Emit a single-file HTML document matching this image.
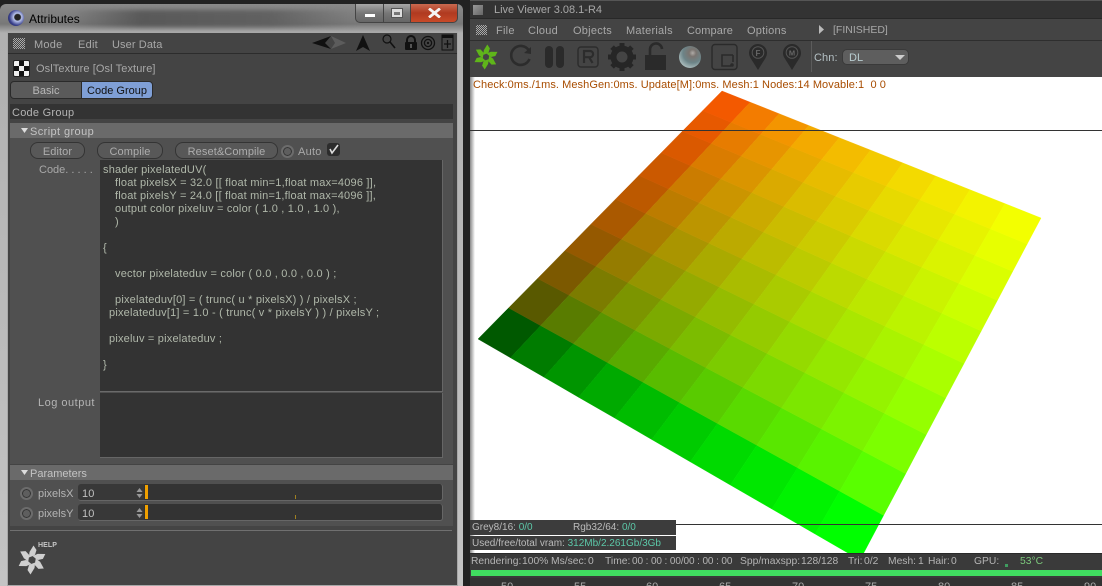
<!DOCTYPE html>
<html>
<head>
<meta charset="utf-8">
<style>
html,body{margin:0;padding:0;width:1102px;height:586px;overflow:hidden;background:#222;font-family:"Liberation Sans",sans-serif;font-size:11px}
#w{position:relative;width:1102px;height:586px;overflow:hidden;background:#222}
.a{position:absolute}
.t{position:absolute;white-space:nowrap;line-height:14px;color:#a8a8a8;margin-top:1px;letter-spacing:.1px}
.b{position:absolute;box-sizing:border-box;height:17px;top:142px;border-radius:8px;background:#585858;border:1px solid #343434;color:#adadad;text-align:center;line-height:18px;font-size:11px;letter-spacing:.1px}
.c{color:#b0b8aa;left:103px;letter-spacing:.2px}
.v{color:#5cc8a8}
.s{color:#b4b4b4;top:554px;font-size:10.3px;letter-spacing:0}
.i{font-size:10px;letter-spacing:0;color:#bbb}
.m{letter-spacing:.25px}
.rad{position:absolute;box-sizing:border-box;width:13px;height:13px;border-radius:50%;background:#5e5e5e;border:2px solid #6c6c6c;box-shadow:inset 0 0 0 1px #333}
.n{position:absolute;top:581px;color:#aaa;font-size:11px;line-height:12px}
</style>
</head>
<body>
<div id="w">
<!-- LEFT WINDOW -->
<div class="a" style="left:0;top:0;width:470px;height:586px;background:#222"></div>
<div class="a" style="left:0;top:4px;width:463px;height:582px;border-radius:6px 6px 0 0;background:linear-gradient(#8a8a8a,#787878 20px,#b0b0b0 29px,#c4c4c4)"></div>
<div class="a" style="left:70px;top:10px;width:285px;height:17px;background:linear-gradient(90deg,#55555500,#505050cc 25%,#5a5a5acc 70%,#8a8a8a00);filter:blur(2px)"></div>
<div class="a" style="left:7px;top:32px;width:451px;height:554px;background:#444;border:1px solid #a8a8a8;box-sizing:border-box"></div>
<!-- sys buttons -->
<div class="a" style="left:355px;top:4px;width:29px;height:19px;box-sizing:border-box;border:1px solid #444;border-top:none;border-radius:0 0 0 5px;background:linear-gradient(#a8a8a8,#777 50%,#666)"></div>
<div class="a" style="left:384px;top:4px;width:27px;height:19px;box-sizing:border-box;border:1px solid #444;border-top:none;border-left:none;background:linear-gradient(#a8a8a8,#777 50%,#666)"></div>
<div class="a" style="left:411px;top:4px;width:47px;height:19px;box-sizing:border-box;border:1px solid #444;border-top:none;border-left:none;border-radius:0 0 5px 0;background:linear-gradient(#c86a50,#b03a20 50%,#c84a28)"></div>
<div class="a" style="left:365px;top:14px;width:10px;height:3px;background:#fff"></div>
<div class="a" style="left:392px;top:9px;width:10px;height:8px;box-sizing:border-box;border:2px solid #ddd;border-top-width:3px;outline:1px solid #555"></div>
<svg class="a" style="left:428px;top:8px" width="13" height="10" viewBox="0 0 13 10"><path d="M1 .5 L12 9.500 M12 .5 L1 9.500" stroke="#f4f4f4" stroke-width="2.8"/></svg>
<!-- C4D logo + title -->
<div class="a" style="left:8px;top:10px;width:16px;height:16px;border-radius:50%;background:radial-gradient(circle at 60% 45%,#222 0,#222 22%,#b9c4ec 30%,#39408c 62%,#15183c 100%)"></div>
<div class="t" style="left:29px;top:11px;color:#000;font-size:12px;letter-spacing:0">Attributes</div>
<!-- attr menu -->
<div class="a" style="left:8px;top:53px;width:449px;height:1px;background:#2c2c2c"></div>
<div class="a" style="left:13px;top:38px;width:12px;height:11px;background:repeating-conic-gradient(#aaa 0 25%,#444 0 50%) 0 0/2px 2px"></div>
<div class="t m" style="left:34px;top:37px">Mode</div>
<div class="t m" style="left:78px;top:37px">Edit</div>
<div class="t" style="left:112px;top:37px">User Data</div>
<svg class="a" style="left:305px;top:32px" width="152" height="22" viewBox="305 32 152 22">
<path d="M312 43 L331 36 L325 43 L331 49 Z" fill="#111"/>
<path d="M346 43 L331 36 L335 43 L331 49 Z" fill="#5c5c5c"/>
<path d="M363 35 L370 51 L363 47 L356 51 Z" fill="#111"/>
<circle cx="387" cy="39" r="4" fill="none" stroke="#111" stroke-width="1.2"/><path d="M390 42 L395 48" stroke="#111" stroke-width="1.6"/>
<path d="M407 43 V40 a4 4 0 0 1 8 0 V43" fill="none" stroke="#111" stroke-width="2"/><rect x="405" y="42" width="12" height="8" rx="1" fill="#111"/><rect x="410" y="44" width="2" height="4" fill="#555"/>
<circle cx="428" cy="43" r="6.5" fill="none" stroke="#111" stroke-width="1.3"/><circle cx="428" cy="43" r="3.6" fill="none" stroke="#111" stroke-width="1.3"/><circle cx="428" cy="43" r="1.2" fill="#111"/>
<rect x="442" y="35" width="11" height="15" fill="none" stroke="#111"/><rect x="442" y="35" width="11" height="3" fill="#111"/><path d="M447.5 40 V48 M444 44 H451" stroke="#111" stroke-width="1.3"/>
</svg>
<!-- object -->
<div class="a" style="left:13px;top:60px;width:17px;height:17px;box-sizing:border-box;border:1px solid #222;border-radius:2px;background:repeating-conic-gradient(#111 0 25%,#eee 0 50%) 0 0/10px 10px"></div>
<div class="t" style="left:36px;top:61px">OslTexture [Osl Texture]</div>
<!-- tabs -->
<div class="a" style="left:10px;top:81px;width:72px;height:18px;box-sizing:border-box;border:1px solid #2a2a2a;border-radius:4px 0 0 4px;background:#5a5a5a;color:#b8b8b8;text-align:center;line-height:18px">Basic</div>
<div class="a" style="left:81px;top:81px;width:72px;height:18px;box-sizing:border-box;border:1px solid #2a2a2a;border-radius:0 4px 4px 0;background:#7f9fd6;color:#111;text-align:center;line-height:18px">Code Group</div>
<!-- section -->
<div class="a" style="left:10px;top:104px;width:443px;height:15px;background:#333"></div>
<div class="t m" style="left:12px;top:105px;color:#b4b4b4">Code Group</div>
<div class="a" style="left:10px;top:123px;width:443px;height:15px;background:#6a6a6a"></div>
<svg class="a" style="left:20px;top:128px" width="9" height="6"><path d="M1 0H8L4.5 5Z" fill="#ddd"/></svg>
<div class="t" style="left:30px;top:124px;color:#c4c4c4;letter-spacing:.4px">Script group</div>
<div class="a" style="left:10px;top:138px;width:443px;height:326px;background:#505050"></div>
<div class="b" style="left:30px;width:55px">Editor</div>
<div class="b" style="left:97px;width:66px">Compile</div>
<div class="b" style="left:175px;width:103px">Reset&amp;Compile</div>
<div class="rad" style="left:281px;top:145px"></div>
<div class="t m" style="left:298px;top:144px">Auto</div>
<div class="a" style="left:327px;top:143px;width:13px;height:13px;background:#2c2c2c;border-radius:3px"></div>
<svg class="a" style="left:327px;top:143px" width="13" height="13"><path d="M3 6 L5 10 L11 2" fill="none" stroke="#ddd" stroke-width="1.6"/></svg>
<!-- code -->
<div class="a" style="left:100px;top:160px;width:343px;height:232px;box-sizing:border-box;background:#333;border-right:1px solid #666;border-bottom:1px solid #6a6a6a"></div>
<div class="a" style="left:100px;top:393px;width:343px;height:65px;box-sizing:border-box;background:#333;border-right:1px solid #666;border-bottom:1px solid #666"></div>
<div class="t" style="left:39px;top:162px;letter-spacing:0">Code. . . . .</div>
<div class="t" style="left:38px;top:395px;color:#b4b4b4;letter-spacing:.5px">Log output</div>
<div class="t c" style="top:162px">shader pixelatedUV(</div>
<div class="t c" style="left:115px;top:175px">float pixelsX = 32.0 [[ float min=1,float max=4096 ]],</div>
<div class="t c" style="left:115px;top:188px">float pixelsY = 24.0 [[ float min=1,float max=4096 ]],</div>
<div class="t c" style="left:115px;top:201px">output color pixeluv = color ( 1.0 , 1.0 , 1.0 ),</div>
<div class="t c" style="left:115px;top:214px">)</div>
<div class="t c" style="top:240px">{</div>
<div class="t c" style="left:115px;top:266px">vector pixelateduv = color ( 0.0 , 0.0 , 0.0 ) ;</div>
<div class="t c" style="left:115px;top:292px">pixelateduv[0] = ( trunc( u * pixelsX) ) / pixelsX ;</div>
<div class="t c" style="left:109px;top:305px">pixelateduv[1] = 1.0 - ( trunc( v * pixelsY ) ) / pixelsY ;</div>
<div class="t c" style="left:109px;top:331px">pixeluv = pixelateduv ;</div>
<div class="t c" style="top:357px">}</div>
<!-- parameters -->
<div class="a" style="left:10px;top:465px;width:443px;height:15px;background:#6a6a6a"></div>
<svg class="a" style="left:20px;top:470px" width="9" height="6"><path d="M1 0H8L4.5 5Z" fill="#ddd"/></svg>
<div class="t" style="left:30px;top:466px;color:#c4c4c4;letter-spacing:0">Parameters</div>
<div class="a" style="left:10px;top:480px;width:443px;height:46px;background:#505050"></div>
<div class="rad" style="left:20px;top:487px"></div>
<div class="rad" style="left:20px;top:507px"></div>
<div class="t" style="left:38px;top:486px;color:#b4b4b4;letter-spacing:0">pixelsX</div>
<div class="t" style="left:38px;top:506px;color:#b4b4b4;letter-spacing:0">pixelsY</div>
<div class="a" style="left:78px;top:484px;width:66px;height:17px;box-sizing:border-box;background:#383838;border-bottom:1px solid #666;border-radius:3px 0 0 3px"></div>
<div class="a" style="left:78px;top:504px;width:66px;height:17px;box-sizing:border-box;background:#383838;border-bottom:1px solid #666;border-radius:3px 0 0 3px"></div>
<div class="t" style="left:82px;top:486px;color:#c0c0c0">10</div>
<div class="t" style="left:82px;top:506px;color:#c0c0c0">10</div>
<svg class="a" style="left:136px;top:488px" width="7" height="10"><path d="M3.5 0L6.5 4H.5ZM3.5 10L.5 6H6.5Z" fill="#999"/></svg>
<svg class="a" style="left:136px;top:508px" width="7" height="10"><path d="M3.5 0L6.5 4H.5ZM3.5 10L.5 6H6.5Z" fill="#999"/></svg>
<div class="a" style="left:144px;top:484px;width:299px;height:17px;box-sizing:border-box;background:#333;border-right:1px solid #666;border-bottom:1px solid #666;border-radius:0 3px 3px 0"></div>
<div class="a" style="left:144px;top:504px;width:299px;height:17px;box-sizing:border-box;background:#333;border-right:1px solid #666;border-bottom:1px solid #666;border-radius:0 3px 3px 0"></div>
<div class="a" style="left:145px;top:485px;width:3px;height:14px;background:#f0a000"></div>
<div class="a" style="left:145px;top:505px;width:3px;height:14px;background:#f0a000"></div>
<div class="a" style="left:295px;top:495px;width:1px;height:4px;background:#a08020"></div>
<div class="a" style="left:295px;top:515px;width:1px;height:4px;background:#a08020"></div>
<div class="a" style="left:10px;top:530px;width:442px;height:1px;background:#707070"></div>
<svg class="a" style="left:16px;top:543px" width="32" height="34" viewBox="-16 -17 32 34"><g fill="#cfcfcf">
<path d="M-3.2 -2.5 L-2.5 -8 L1.500 -14.500 L4.500 -10 L3 -5.200 L1.200 -4.100 Z"/>
<path d="M-3.2 -2.5 L-2.5 -8 L1.500 -14.500 L4.500 -10 L3 -5.200 L1.200 -4.100 Z" transform="rotate(60)"/>
<path d="M-3.2 -2.5 L-2.5 -8 L1.500 -14.500 L4.500 -10 L3 -5.200 L1.200 -4.100 Z" transform="rotate(120)"/>
<path d="M-3.2 -2.5 L-2.5 -8 L1.500 -14.500 L4.500 -10 L3 -5.200 L1.200 -4.100 Z" transform="rotate(180)"/>
<path d="M-3.2 -2.5 L-2.5 -8 L1.500 -14.500 L4.500 -10 L3 -5.200 L1.200 -4.100 Z" transform="rotate(240)"/>
<path d="M-3.2 -2.5 L-2.5 -8 L1.500 -14.500 L4.500 -10 L3 -5.200 L1.200 -4.100 Z" transform="rotate(300)"/>
</g></svg>
<div class="t" style="left:38px;top:541px;color:#c8c8c8;font-size:7px;font-weight:bold;line-height:9px;margin:0">HELP</div>

<!-- RIGHT WINDOW -->
<div class="a" style="left:470px;top:0;width:632px;height:18px;background:#333;border-top:1px solid #555;box-sizing:border-box"></div>
<div class="a" style="left:473px;top:5px;width:10px;height:10px;background:linear-gradient(135deg,#999,#666)"></div>
<div class="t" style="left:494px;top:2px;color:#a8a8a8;letter-spacing:0">Live Viewer 3.08.1-R4</div>
<div class="a" style="left:470px;top:18px;width:632px;height:22px;background:#444;border-top:1px solid #282828;box-sizing:border-box"></div>
<div class="a" style="left:476px;top:25px;width:11px;height:10px;background:repeating-conic-gradient(#aaa 0 25%,#444 0 50%) 0 0/2px 2px"></div>
<div class="t m" style="left:496px;top:23px">File</div>
<div class="t m" style="left:528px;top:23px">Cloud</div>
<div class="t m" style="left:573px;top:23px">Objects</div>
<div class="t m" style="left:626px;top:23px">Materials</div>
<div class="t" style="left:687px;top:23px">Compare</div>
<div class="t m" style="left:747px;top:23px">Options</div>
<svg class="a" style="left:819px;top:25px" width="6" height="9"><path d="M0 0L5 4.500L0 9Z" fill="#bbb"/></svg>
<div class="t" style="left:833px;top:22px;font-size:10.5px;letter-spacing:0">[FINISHED]</div>
<div class="a" style="left:470px;top:40px;width:632px;height:37px;background:#444;border-top:1px solid #2e2e2e;box-sizing:border-box"></div>
<svg class="a" style="left:470px;top:41px" width="345" height="36" viewBox="470 41 345 36">
<g fill="#5fb51a" transform="translate(486 57) scale(.86)">
<path d="M-3.2 -2.5 L-2.5 -8 L1.500 -14.500 L4.500 -10 L3 -5.200 L1.200 -4.100 Z"/>
<path d="M-3.2 -2.5 L-2.5 -8 L1.500 -14.500 L4.500 -10 L3 -5.200 L1.200 -4.100 Z" transform="rotate(60)"/>
<path d="M-3.2 -2.5 L-2.5 -8 L1.500 -14.500 L4.500 -10 L3 -5.200 L1.200 -4.100 Z" transform="rotate(120)"/>
<path d="M-3.2 -2.5 L-2.5 -8 L1.500 -14.500 L4.500 -10 L3 -5.200 L1.200 -4.100 Z" transform="rotate(180)"/>
<path d="M-3.2 -2.5 L-2.5 -8 L1.500 -14.500 L4.500 -10 L3 -5.200 L1.200 -4.100 Z" transform="rotate(240)"/>
<path d="M-3.2 -2.5 L-2.5 -8 L1.500 -14.500 L4.500 -10 L3 -5.200 L1.200 -4.100 Z" transform="rotate(300)"/>
</g>
<path d="M528.500 50 A9.500 9.500 0 1 0 529.500 59" fill="none" stroke="#2c2c2c" stroke-width="2.6"/>
<path d="M524 53 L531 54 L531 47 Z" fill="#2c2c2c"/>
<rect x="545" y="46" width="8" height="22" rx="4" fill="#2a2a2a"/>
<rect x="556" y="46" width="8" height="22" rx="4" fill="#2a2a2a"/>
<rect x="578" y="47" width="20" height="20" rx="3" fill="none" stroke="#2c2c2c" stroke-width="1.4"/>
<path d="M584 63 V51 H590 a3 3 0 0 1 0 6.200 H584 M589 57 L592.500 63" fill="none" stroke="#2c2c2c" stroke-width="2.2"/>
<circle cx="622" cy="57" r="8.500" fill="none" stroke="#262626" stroke-width="6"/>
<g fill="#262626" transform="translate(622 57)">
<rect x="-2.5" y="-14" width="5" height="5"/><rect x="-2.5" y="-14" width="5" height="5" transform="rotate(45)"/><rect x="-2.5" y="-14" width="5" height="5" transform="rotate(90)"/><rect x="-2.5" y="-14" width="5" height="5" transform="rotate(135)"/><rect x="-2.5" y="-14" width="5" height="5" transform="rotate(180)"/><rect x="-2.5" y="-14" width="5" height="5" transform="rotate(225)"/><rect x="-2.5" y="-14" width="5" height="5" transform="rotate(270)"/><rect x="-2.5" y="-14" width="5" height="5" transform="rotate(315)"/>
</g>
<rect x="645" y="55" width="21" height="15" fill="#2a2a2a"/>
<path d="M650 55 V50 a6 6 0 0 1 12 -1" fill="none" stroke="#2a2a2a" stroke-width="2.6"/>
<defs><radialGradient id="sp" cx=".62" cy=".32" r=".8"><stop offset="0" stop-color="#b0aca8"/><stop offset=".2" stop-color="#7a7470"/><stop offset=".55" stop-color="#6c8488"/><stop offset="1" stop-color="#c0d0d0"/></radialGradient></defs>
<circle cx="690" cy="57" r="11" fill="url(#sp)"/>
<rect x="712" y="44.500" width="25" height="25" rx="3" fill="none" stroke="#2a2a2a" stroke-width="1.4"/>
<path d="M733 55 H722 V66 H731 M733 55 V62" fill="none" stroke="#2a2a2a" stroke-width="1.6"/>
<circle cx="732" cy="65" r="1.800" fill="#2a2a2a"/>
<path d="M758 70 L750.500 58 A9 9 0 1 1 765.500 58 Z" fill="#2a2a2a"/>
<circle cx="758" cy="52.500" r="5.800" fill="none" stroke="#555" stroke-width="1"/>
<text x="758" y="56" text-anchor="middle" font-family="Liberation Sans" font-size="8" font-weight="bold" fill="#666">F</text>
<path d="M792 70 L784.500 58 A9 9 0 1 1 799.500 58 Z" fill="#2a2a2a"/>
<circle cx="792" cy="52.500" r="5.800" fill="none" stroke="#555" stroke-width="1"/>
<text x="792" y="55.500" text-anchor="middle" font-family="Liberation Sans" font-size="7.500" font-weight="bold" fill="#666">M</text>
<rect x="811" y="0" width="1" height="72" fill="#5c5c5c"/>
</svg>
<div class="t" style="left:814px;top:50px;color:#b4c0c4">Chn:</div>
<div class="a" style="left:842px;top:49px;width:67px;height:16px;background:#5e5e5e;border-radius:5px;border:1px solid #3a3a3a;box-sizing:border-box"></div>
<div class="t" style="left:849px;top:50px;color:#b8ccd0">DL</div>
<svg class="a" style="left:895px;top:55px" width="10" height="5"><path d="M0 0H10L5 5Z" fill="#ccc"/></svg>

<!-- viewport -->
<div class="a" style="left:470px;top:77px;width:632px;height:476px;background:#fff"></div>
<div class="a" style="left:470px;top:77px;width:5px;height:476px;background:linear-gradient(90deg,#888,#fff)"></div>
<svg id="q" class="a" style="left:470px;top:77px" width="632" height="476" viewBox="470 77 632 476"></svg>
<div class="a" style="left:470px;top:130px;width:632px;height:1px;background:#333"></div>
<div class="a" style="left:676px;top:524px;width:426px;height:1px;background:#333"></div>
<div class="t" style="left:473px;top:77px;color:#a84c00;letter-spacing:.07px">Check:0ms./1ms. MeshGen:0ms. Update[M]:0ms. Mesh:1 Nodes:14 Movable:1&nbsp;&nbsp;0 0</div>
<div class="a" style="left:470px;top:520px;width:206px;height:15px;background:#3c3c3c"></div>
<div class="a" style="left:470px;top:536px;width:206px;height:14px;background:#3c3c3c"></div>
<div class="t i" style="left:472px;top:520px">Grey8/16: <span class="v">0/0</span></div>
<div class="t i" style="left:573px;top:520px">Rgb32/64: <span class="v">0/0</span></div>
<div class="t i" style="left:472px;top:536px">Used/free/total vram: <span class="v">312Mb/2.261Gb/3Gb</span></div>
<!-- status -->
<div class="a" style="left:470px;top:553px;width:632px;height:33px;background:#3a3a3a;border-top:1px solid #2a2a2a;box-sizing:border-box"></div>
<div class="t s" style="left:471px">Rendering:</div><div class="t s v" style="left:522px">100%</div>
<div class="t s" style="left:551px">Ms/sec:</div><div class="t s v" style="left:588px">0</div>
<div class="t s" style="left:605px">Time:</div><div class="t s v" style="left:632px;font-size:10px;letter-spacing:-.1px">00 : 00 : 00/00 : 00 : 00</div>
<div class="t s" style="left:740px">Spp/maxspp:</div><div class="t s v" style="left:801px">128/128</div>
<div class="t s" style="left:848px">Tri:</div><div class="t s v" style="left:864px">0/2</div>
<div class="t s" style="left:888px">Mesh:</div><div class="t s v" style="left:918px">1</div>
<div class="t s" style="left:928px">Hair:</div><div class="t s v" style="left:951px">0</div>
<div class="t s" style="left:974px">GPU:</div>
<div class="a" style="left:1005px;top:564px;width:3px;height:3px;background:#3f9c5f"></div>
<div class="t s" style="left:1020px;color:#7cc87c">53°C</div>
<div class="a" style="left:471px;top:570px;width:631px;height:6px;background:#40dc60"></div>
<div class="a" style="left:470px;top:578px;width:632px;height:8px;background:#333"></div>
<div class="n" style="left:501px">50</div><div class="n" style="left:574px">55</div><div class="n" style="left:646px">60</div><div class="n" style="left:719px">65</div><div class="n" style="left:792px">70</div><div class="n" style="left:865px">75</div><div class="n" style="left:938px">80</div><div class="n" style="left:1011px">85</div><div class="n" style="left:1084px">90</div>
</div>
<script>
(function(){
var P=[[478,339],[860,560],[1041,218],[722,91]];
var x0=P[0][0],y0=P[0][1],x1=P[1][0],y1=P[1][1],x2=P[2][0],y2=P[2][1],x3=P[3][0],y3=P[3][1];
var dx1=x1-x2,dx2=x3-x2,sx=x0-x1+x2-x3,dy1=y1-y2,dy2=y3-y2,sy=y0-y1+y2-y3;
var den=dx1*dy2-dx2*dy1,g=(sx*dy2-dx2*sy)/den,h=(dx1*sy-sx*dy1)/den;
var a=x1-x0+g*x1,b=x3-x0+h*x3,d=y1-y0+g*y1,e=y3-y0+h*y3;
function m(u,v){var w=g*u+h*v+1;return ((a*u+b*v+x0)/w).toFixed(1)+','+((d*u+e*v+y0)/w).toFixed(1);}
function s(c){return Math.round(255*(c<=0.0031308?12.92*c:1.055*Math.pow(c,1/2.4)-0.055));}
var o='';
for(var i=0;i<10;i++)for(var j=0;j<10;j++){
var u=i/10,v=j/10,U=(i+1)/10,V=(j+1)/10,col='rgb('+s(j/10)+','+s((i+1)/10)+',0)';
o+='<polygon points="'+m(u,v)+' '+m(U,v)+' '+m(U,V)+' '+m(u,V)+'" fill="'+col+'" stroke="'+col+'" stroke-width=".4"/>';
}
document.getElementById('q').innerHTML=o;
})();
</script>
</body>
</html>
